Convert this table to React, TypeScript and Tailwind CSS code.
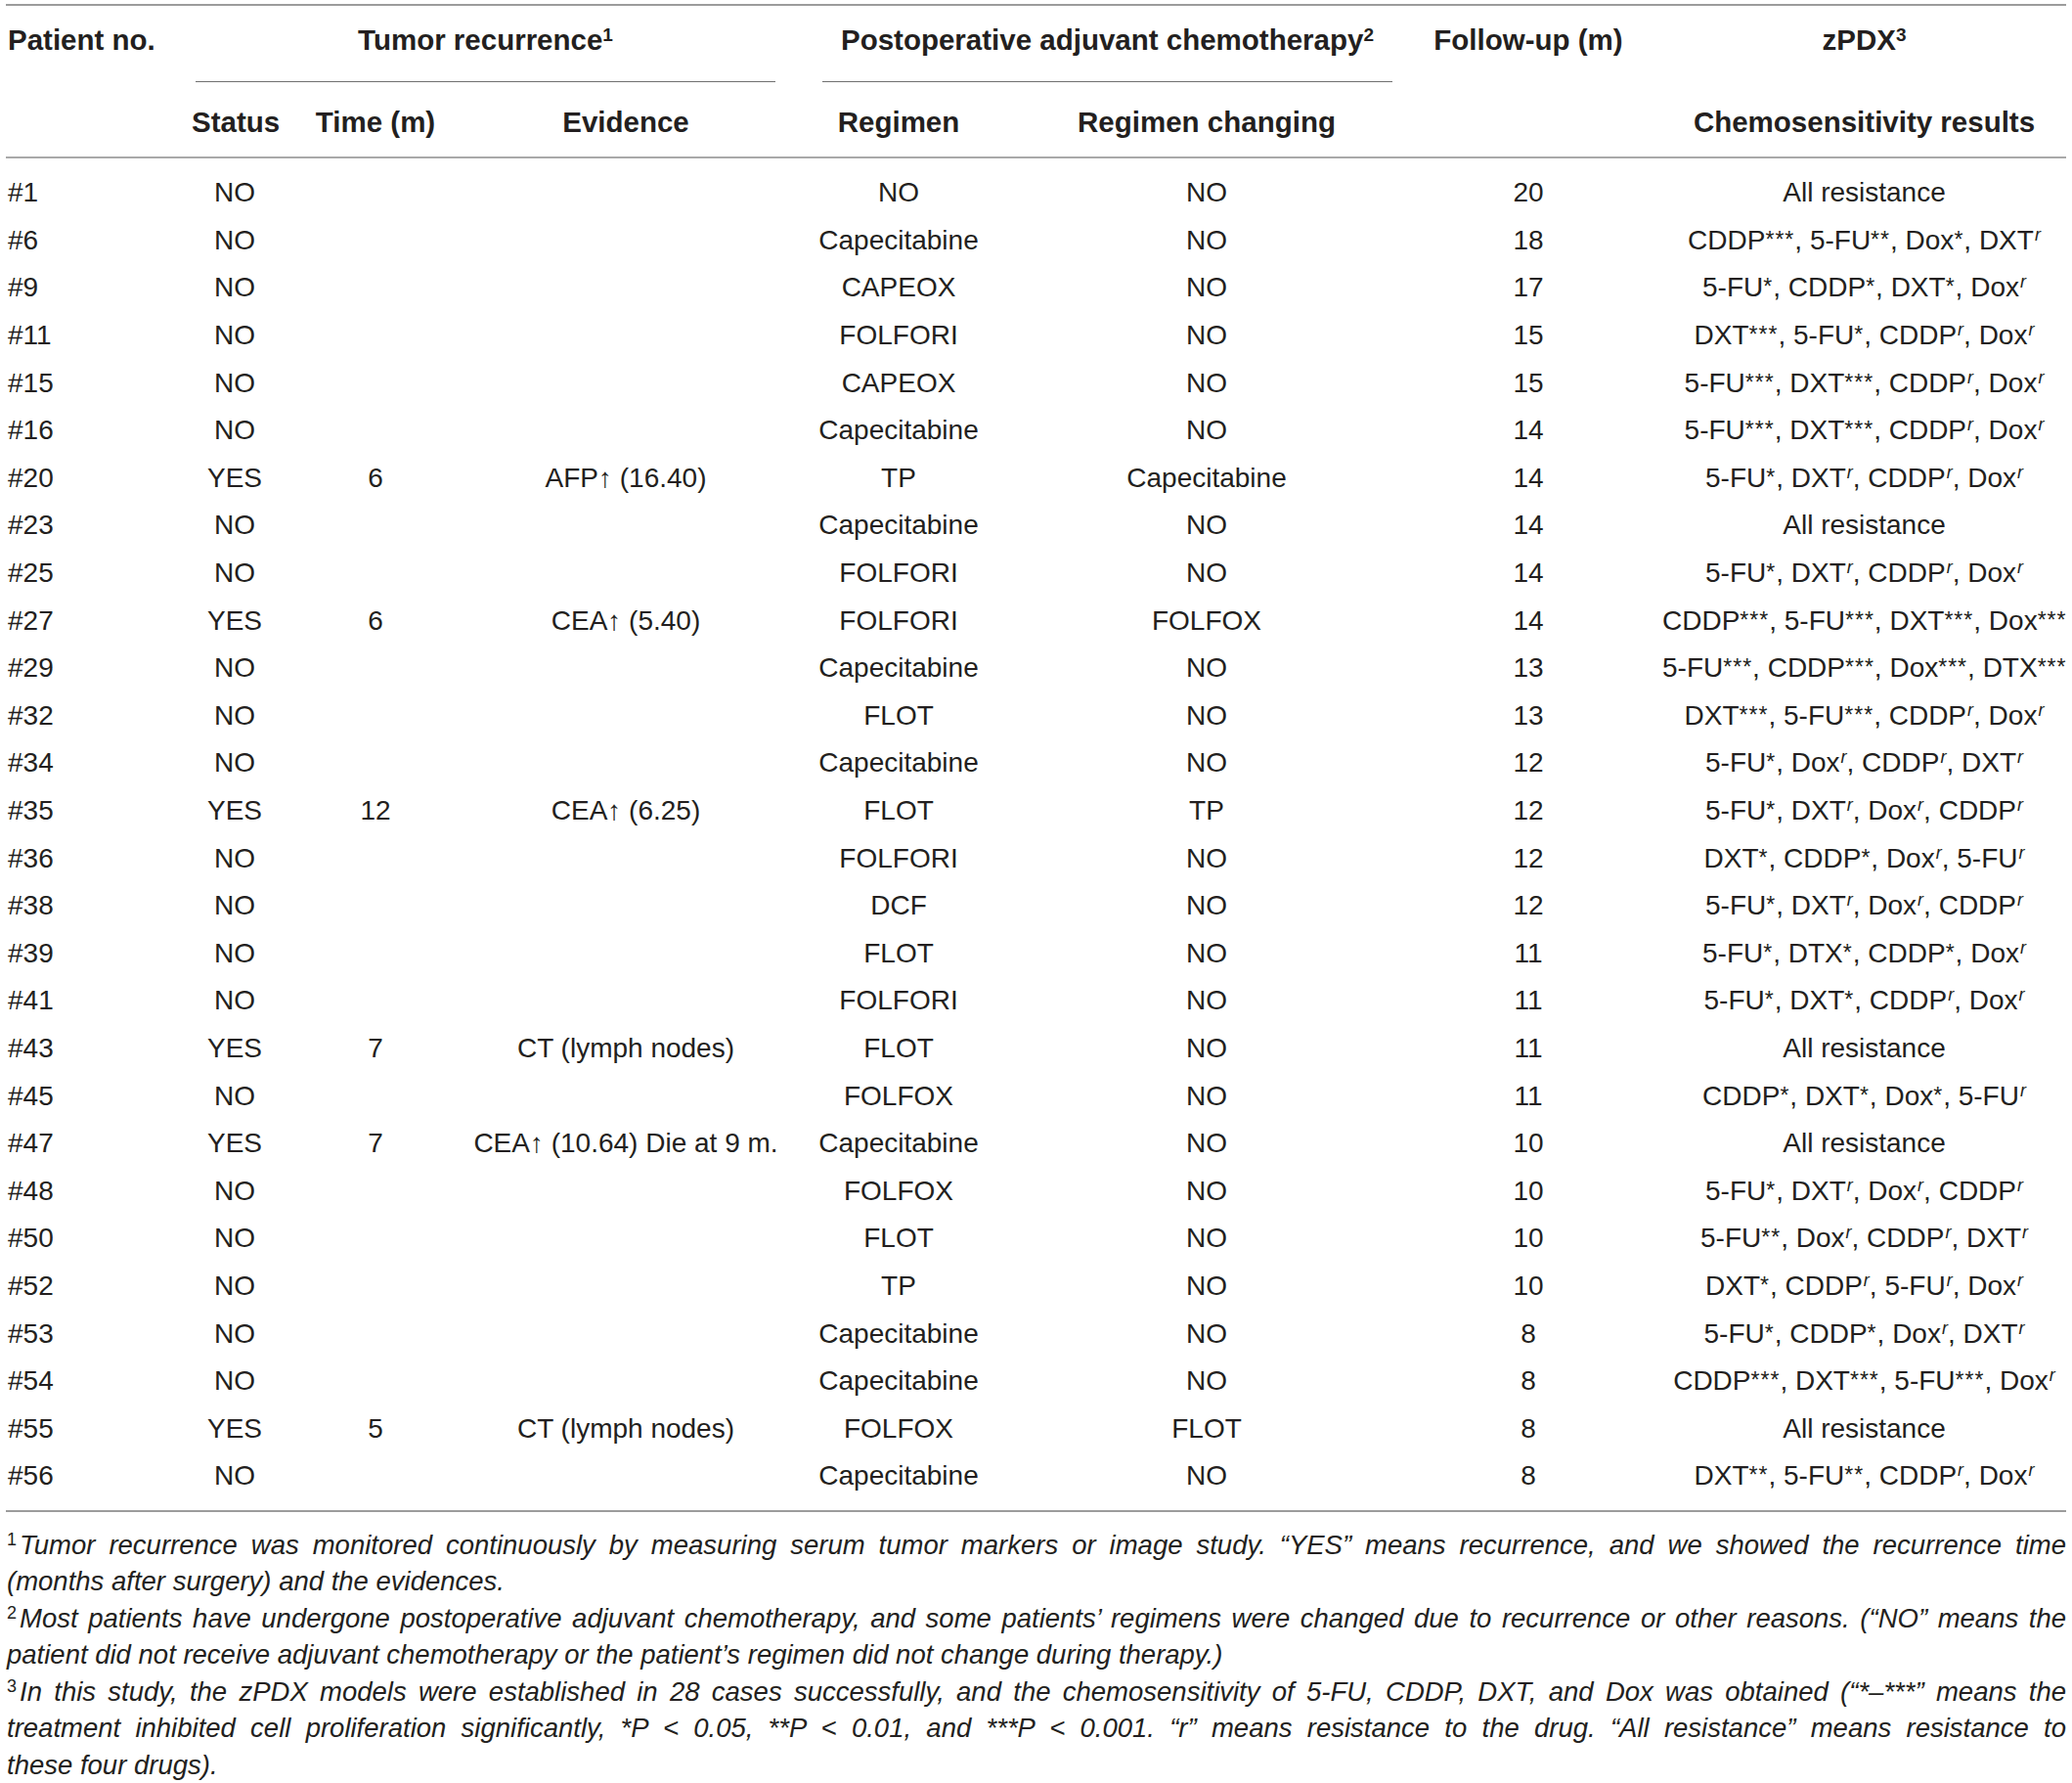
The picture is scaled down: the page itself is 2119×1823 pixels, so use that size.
import React from "react";

type Row = {
    id: string;
    status: string;
    time?: string;
    evidence?: string;
    regimen: string;
    change: string;
    followUp: string;
    chemo: string;
};

const rows: Row[] = [
    { id: "#1", status: "NO", regimen: "NO", change: "NO", followUp: "20", chemo: "All resistance" },
    { id: "#6", status: "NO", regimen: "Capecitabine", change: "NO", followUp: "18", chemo: "CDDP***, 5-FU**, Dox*, DXT^r" },
    { id: "#9", status: "NO", regimen: "CAPEOX", change: "NO", followUp: "17", chemo: "5-FU*, CDDP*, DXT*, Dox^r" },
    { id: "#11", status: "NO", regimen: "FOLFORI", change: "NO", followUp: "15", chemo: "DXT***, 5-FU*, CDDP^r, Dox^r" },
    { id: "#15", status: "NO", regimen: "CAPEOX", change: "NO", followUp: "15", chemo: "5-FU***, DXT***, CDDP^r, Dox^r" },
    { id: "#16", status: "NO", regimen: "Capecitabine", change: "NO", followUp: "14", chemo: "5-FU***, DXT***, CDDP^r, Dox^r" },
    { id: "#20", status: "YES", time: "6", evidence: "AFP↑ (16.40)", regimen: "TP", change: "Capecitabine", followUp: "14", chemo: "5-FU*, DXT^r, CDDP^r, Dox^r" },
    { id: "#23", status: "NO", regimen: "Capecitabine", change: "NO", followUp: "14", chemo: "All resistance" },
    { id: "#25", status: "NO", regimen: "FOLFORI", change: "NO", followUp: "14", chemo: "5-FU*, DXT^r, CDDP^r, Dox^r" },
    { id: "#27", status: "YES", time: "6", evidence: "CEA↑ (5.40)", regimen: "FOLFORI", change: "FOLFOX", followUp: "14", chemo: "CDDP***, 5-FU***, DXT***, Dox***" },
    { id: "#29", status: "NO", regimen: "Capecitabine", change: "NO", followUp: "13", chemo: "5-FU***, CDDP***, Dox***, DTX***" },
    { id: "#32", status: "NO", regimen: "FLOT", change: "NO", followUp: "13", chemo: "DXT***, 5-FU***, CDDP^r, Dox^r" },
    { id: "#34", status: "NO", regimen: "Capecitabine", change: "NO", followUp: "12", chemo: "5-FU*, Dox^r, CDDP^r, DXT^r" },
    { id: "#35", status: "YES", time: "12", evidence: "CEA↑ (6.25)", regimen: "FLOT", change: "TP", followUp: "12", chemo: "5-FU*, DXT^r, Dox^r, CDDP^r" },
    { id: "#36", status: "NO", regimen: "FOLFORI", change: "NO", followUp: "12", chemo: "DXT*, CDDP*, Dox^r, 5-FU^r" },
    { id: "#38", status: "NO", regimen: "DCF", change: "NO", followUp: "12", chemo: "5-FU*, DXT^r, Dox^r, CDDP^r" },
    { id: "#39", status: "NO", regimen: "FLOT", change: "NO", followUp: "11", chemo: "5-FU*, DTX*, CDDP*, Dox^r" },
    { id: "#41", status: "NO", regimen: "FOLFORI", change: "NO", followUp: "11", chemo: "5-FU*, DXT*, CDDP^r, Dox^r" },
    { id: "#43", status: "YES", time: "7", evidence: "CT (lymph nodes)", regimen: "FLOT", change: "NO", followUp: "11", chemo: "All resistance" },
    { id: "#45", status: "NO", regimen: "FOLFOX", change: "NO", followUp: "11", chemo: "CDDP*, DXT*, Dox*, 5-FU^r" },
    { id: "#47", status: "YES", time: "7", evidence: "CEA↑ (10.64) Die at 9 m.", regimen: "Capecitabine", change: "NO", followUp: "10", chemo: "All resistance" },
    { id: "#48", status: "NO", regimen: "FOLFOX", change: "NO", followUp: "10", chemo: "5-FU*, DXT^r, Dox^r, CDDP^r" },
    { id: "#50", status: "NO", regimen: "FLOT", change: "NO", followUp: "10", chemo: "5-FU**, Dox^r, CDDP^r, DXT^r" },
    { id: "#52", status: "NO", regimen: "TP", change: "NO", followUp: "10", chemo: "DXT*, CDDP^r, 5-FU^r, Dox^r" },
    { id: "#53", status: "NO", regimen: "Capecitabine", change: "NO", followUp: "8", chemo: "5-FU*, CDDP*, Dox^r, DXT^r" },
    { id: "#54", status: "NO", regimen: "Capecitabine", change: "NO", followUp: "8", chemo: "CDDP***, DXT***, 5-FU***, Dox^r" },
    { id: "#55", status: "YES", time: "5", evidence: "CT (lymph nodes)", regimen: "FOLFOX", change: "FLOT", followUp: "8", chemo: "All resistance" },
    { id: "#56", status: "NO", regimen: "Capecitabine", change: "NO", followUp: "8", chemo: "DXT**, 5-FU**, CDDP^r, Dox^r" },
];

const cols = "grid grid-cols-[190px_88px_200px_312px_246px_384px_274px_413px]";

// "CDDP***, DXT^r" -> drug names with raised marks
function Chemo({ value }: { value: string }) {
    if (value === "All resistance") return <>{value}</>;
    const items = value.split(", ");
    return (
        <>
            {items.map((item, i) => {
                const resist = item.endsWith("^r");
                const name = resist ? item.slice(0, -2) : item.replace(/\*+$/, "");
                const stars = resist ? "" : item.slice(name.length);
                return (
                    <React.Fragment key={i}>
                        {name}
                        {resist ? (
                            <sup className="text-[18px] italic pl-[1px]">r</sup>
                        ) : (
                            <span className="relative -top-[2px] text-[23px] tracking-[1px]">{stars}</span>
                        )}
                        {i < items.length - 1 && ", "}
                    </React.Fragment>
                );
            })}
        </>
    );
}

function Note({ n, lines }: { n: string; lines: string[] }) {
    return (
        <div>
            {lines.map((line, i) => {
                const last = i === lines.length - 1;
                return (
                    <div
                        key={i}
                        className={last ? "text-left" : "text-justify [text-align-last:justify] whitespace-nowrap"}
                    >
                        {i === 0 && <sup className="not-italic text-[18px] mr-[3px]">{n}</sup>}
                        {line}
                    </div>
                );
            })}
        </div>
    );
}

export default function App() {
    return (
        <div className="w-[2119px] min-h-[1823px] bg-white px-[6px] pt-[4px] text-[#231f20] font-['Liberation_Sans',Arial,sans-serif]">
            <div className="border-t-2 border-[#9c9c9c]">
                {/* header, first line */}
                <div className={`${cols} h-[78px] text-[29.5px] font-bold leading-[32px]`}>
                    <div className="pl-[2px] pt-[19px]">Patient no.</div>
                    <div className="col-span-3 ml-[4px] mr-[3px] border-b-[1.5px] border-[#707070] pt-[19px] text-center">
                        Tumor recurrence<sup className="text-[19px]">1</sup>
                    </div>
                    <div className="col-span-2 ml-[45px] mr-[2px] border-b-[1.5px] border-[#707070] pt-[19px] text-center">
                        Postoperative adjuvant chemotherapy<sup className="text-[19px]">2</sup>
                    </div>
                    <div className="pt-[19px] text-center">Follow-up (m)</div>
                    <div className="pt-[19px] text-center">
                        zPDX<sup className="text-[19px]">3</sup>
                    </div>
                </div>

                {/* header, second line */}
                <div className={`${cols} h-[78px] border-b-2 border-[#a9a9a9] pt-[25px] text-[29.5px] font-bold leading-[32px]`}>
                    <div />
                    <div className="text-center">Status</div>
                    <div className="text-center">Time (m)</div>
                    <div className="text-center">Evidence</div>
                    <div className="text-center">Regimen</div>
                    <div className="text-center">Regimen changing</div>
                    <div />
                    <div className="text-center">Chemosensitivity results</div>
                </div>

                {/* body */}
                <div className="border-b-2 border-[#9c9c9c] pt-[11px] pb-[10px] text-[28px]">
                    {rows.map((r) => (
                        <div key={r.id} className={`${cols} h-[48.6px] items-center`}>
                            <div className="pl-[2px]">{r.id}</div>
                            <div className="text-center">{r.status}</div>
                            <div className="text-center">{r.time}</div>
                            <div className="text-center">{r.evidence}</div>
                            <div className="text-center">{r.regimen}</div>
                            <div className="text-center">{r.change}</div>
                            <div className="text-center">{r.followUp}</div>
                            <div className="whitespace-nowrap text-center">
                                <Chemo value={r.chemo} />
                            </div>
                        </div>
                    ))}
                </div>

                {/* footnotes */}
                <div className="pt-[15px] pl-[1px] text-[27.5px] italic leading-[37.5px]">
                    <Note
                        n="1"
                        lines={[
                            "Tumor recurrence was monitored continuously by measuring serum tumor markers or image study. “YES” means recurrence, and we showed the recurrence time",
                            "(months after surgery) and the evidences.",
                        ]}
                    />
                    <Note
                        n="2"
                        lines={[
                            "Most patients have undergone postoperative adjuvant chemotherapy, and some patients’ regimens were changed due to recurrence or other reasons. (“NO” means the",
                            "patient did not receive adjuvant chemotherapy or the patient’s regimen did not change during therapy.)",
                        ]}
                    />
                    <Note
                        n="3"
                        lines={[
                            "In this study, the zPDX models were established in 28 cases successfully, and the chemosensitivity of 5-FU, CDDP, DXT, and Dox was obtained (“*–***” means the",
                            "treatment inhibited cell proliferation significantly, *P < 0.05, **P < 0.01, and ***P < 0.001. “r” means resistance to the drug. “All resistance” means resistance to",
                            "these four drugs).",
                        ]}
                    />
                </div>
            </div>
        </div>
    );
}
